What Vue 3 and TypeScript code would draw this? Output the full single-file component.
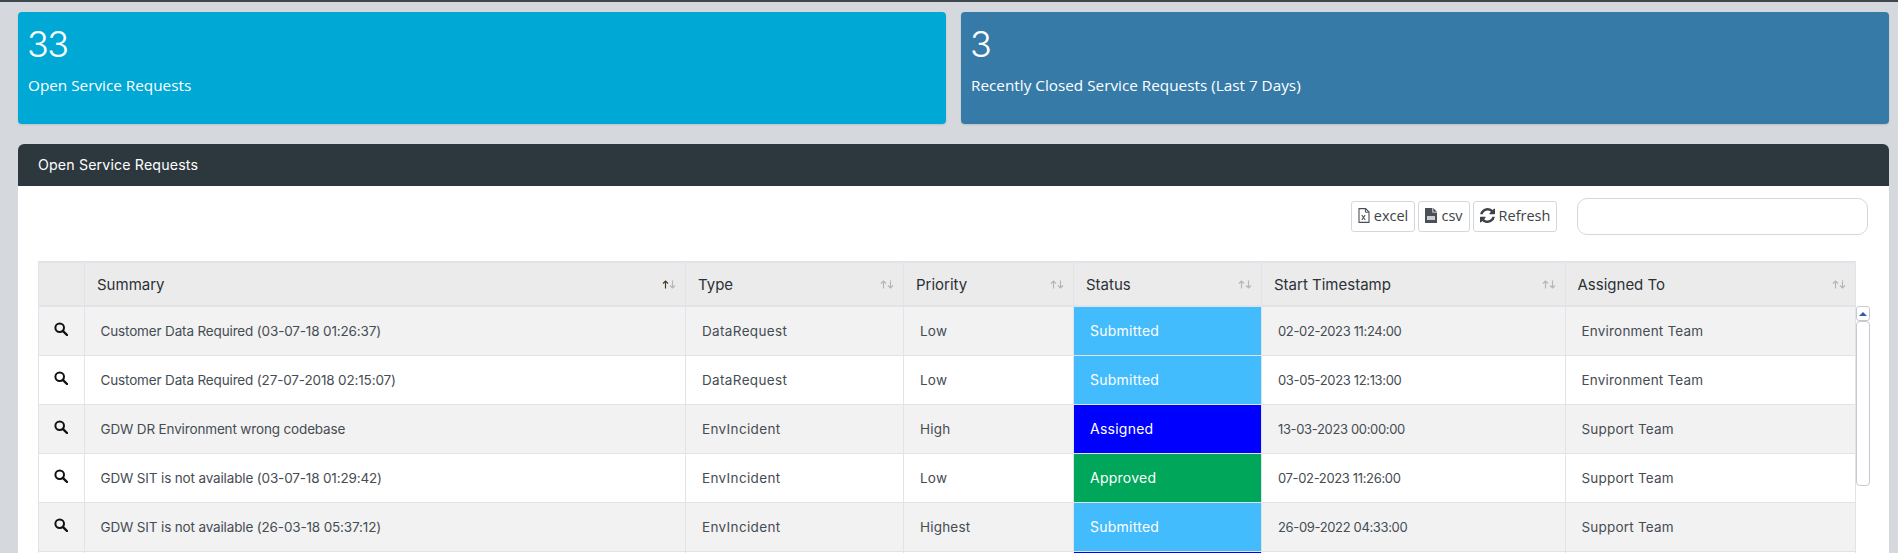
<script setup lang="ts">
interface Row { summary: string; type: string; priority: string; status: string; start: string; assigned: string }
const rows: Row[] = [
  { summary: 'Customer Data Required (03-07-18 01:26:37)', type: 'DataRequest', priority: 'Low', status: 'Submitted', start: '02-02-2023 11:24:00', assigned: 'Environment Team' },
  { summary: 'Customer Data Required (27-07-2018 02:15:07)', type: 'DataRequest', priority: 'Low', status: 'Submitted', start: '03-05-2023 12:13:00', assigned: 'Environment Team' },
  { summary: 'GDW DR Environment wrong codebase', type: 'EnvIncident', priority: 'High', status: 'Assigned', start: '13-03-2023 00:00:00', assigned: 'Support Team' },
  { summary: 'GDW SIT is not available (03-07-18 01:29:42)', type: 'EnvIncident', priority: 'Low', status: 'Approved', start: '07-02-2023 11:26:00', assigned: 'Support Team' },
  { summary: 'GDW SIT is not available (26-03-18 05:37:12)', type: 'EnvIncident', priority: 'Highest', status: 'Submitted', start: '26-09-2022 04:33:00', assigned: 'Support Team' },
]
const columns = ['Summary', 'Type', 'Priority', 'Status', 'Start Timestamp', 'Assigned To']
const statusClass = (s: string) => 's-' + s.toLowerCase()
</script>

<template>
  <div class="page">
    <div class="topline"></div>
    <div class="content">
      <div class="cards">
        <div class="card card-a">
          <div class="num">33</div>
          <div class="lbl">Open Service Requests</div>
        </div>
        <div class="card card-b">
          <div class="num">3</div>
          <div class="lbl">Recently Closed Service Requests (Last 7 Days)</div>
        </div>
      </div>
      <section class="panel">
        <header class="panel-head">Open Service Requests</header>
        <div class="panel-body">
          <div class="toolbar">
            <div class="btns">
              <button class="btn b-excel">
                <svg class="ic" viewBox="0 0 12 15"><path d="M1 .6h6.600L11 4v10.400H1z" fill="none" stroke="#4a5056" stroke-width="1.100"/><path d="M7.400.8v3.400h3.400" fill="none" stroke="#4a5056"/><path d="M3.800 7l3.400 5M7.200 7l-3.400 5" stroke="#4a5056" stroke-width="1.100"/></svg>
                excel
              </button>
              <button class="btn b-csv">
                <svg class="ic" viewBox="0 0 12 15"><path d="M0 0h7.400v4.400H12V15H0zM8.200 0L12 3.700H8.200z" fill="#4a5056"/><rect x="2" y="8" width="8" height="4" fill="#c9ccd0"/></svg>
                csv
              </button>
              <button class="btn b-ref">
                <svg class="ic ic-r" viewBox="0 0 1536 1536"><path fill="#3d4349" d="M1511 928q0 5-1 7-64 268-268 434.500t-478 166.500q-146 0-282.500-55t-243.500-157l-129 129q-19 19-45 19t-45-19-19-45v-448q0-26 19-45t45-19h448q26 0 45 19t19 45-19 45l-137 137q71 66 161 102t187 36q134 0 250-65t186-179q11-17 53-117 8-23 30-23h192q13 0 22.500 9.500t9.500 22.500zm25-800v448q0 26-19 45t-45 19h-448q-26 0-45-19t-19-45 19-45l138-138q-148-137-349-137-134 0-250 65t-186 179q-11 17-53 117-8 23-30 23h-199q-13 0-22.500-9.500t-9.500-22.500v-7q65-268 270-434.500t480-166.500q146 0 284 55.500t245 156.500l130-129q19-19 45-19t45 19 19 45z"/></svg>
                Refresh
              </button>
            </div>
            <input class="search" type="text" />
          </div>
          <div class="table-wrap">
            <table class="grid">
              <colgroup>
                <col class="c0" /><col class="c1" /><col class="c2" /><col class="c3" /><col class="c4" /><col class="c5" /><col class="c6" />
              </colgroup>
              <thead>
                <tr>
                  <th></th>
                  <th v-for="(c, i) in columns" :key="c">
                    <div class="th-in">
                      <span>{{ c }}</span>
                      <svg class="sort" viewBox="0 0 14 9">
                        <path d="M3.500 8.500V1M1 3.500L3.500 1 6 3.500" fill="none" :stroke="i === 0 ? '#4a3a2a' : '#b4b6b8'" stroke-width="1.200"/>
                        <path d="M10.500.5V8M8 5.500L10.500 8 13 5.500" fill="none" stroke="#b4b6b8" stroke-width="1.200"/>
                      </svg>
                    </div>
                  </th>
                </tr>
              </thead>
              <tbody>
                <tr v-for="r in rows" :key="r.summary">
                  <td class="act">
                    <svg class="mag" viewBox="0 0 14 14"><circle cx="5.700" cy="5.700" r="4.300" fill="none" stroke="#111" stroke-width="2"/><path d="M8.800 8.800L13 13" stroke="#111" stroke-width="2.400" stroke-linecap="round"/></svg>
                  </td>
                  <td class="t-sum">{{ r.summary }}</td>
                  <td class="t-type">{{ r.type }}</td>
                  <td>{{ r.priority }}</td>
                  <td class="st" :class="statusClass(r.status)">{{ r.status }}</td>
                  <td class="t-date">{{ r.start }}</td>
                  <td>{{ r.assigned }}</td>
                </tr>
                <tr>
                  <td class="act"></td><td></td><td></td><td></td><td class="st s-assigned"></td><td></td><td></td>
                </tr>
              </tbody>
            </table>
            <div class="scroll">
              <div class="sb-btn"><span class="tri"></span></div>
              <div class="sb-thumb"></div>
            </div>
          </div>
        </div>
      </section>
    </div>
  </div>
</template>

<style>
html, body { margin: 0; height: 553px; overflow: hidden; background: #d5d8dd; }
</style>

<style scoped>
.page { height: 553px; overflow: hidden; background: #d5d8dd; font-family: "Inter", "Liberation Sans", sans-serif; }
.topline { height: 2px; background: #3e474e; }
.content { padding: 10px 9px 0 18px; }
.cards { display: flex; gap: 15px; margin-bottom: 20px; }
.card { flex: 1; height: 112px; box-sizing: border-box; border-radius: 4px; color: #fff; padding: 12px 10px; box-shadow: 0 1px 2px rgba(0,0,0,.12); }
.card-a { background: #00a8d6; }
.card-b { background: #367ba8; }
.num { font-size: 36px; font-weight: 300; line-height: 40px; letter-spacing: -1.500px; margin-left: -1px; }
.lbl { font-family: "Open Sans", sans-serif; font-size: 15.300px; line-height: 20px; margin-top: 11px; }
.panel { border-radius: 6px 6px 0 0; overflow: hidden; background: #fff; }
.panel-head { height: 42px; background: #2d383e; color: #fff; font-size: 14.200px; line-height: 42px; padding-left: 20px; letter-spacing: .15px; }
.panel-body { padding: 12px 21px 0 20px; }
.toolbar { display: flex; justify-content: flex-end; align-items: center; height: 37px; margin-bottom: 26px; }
.btns { display: flex; gap: 3px; }
.btn { display: flex; align-items: center; justify-content: center; gap: 4px; height: 31px; padding: 0 0 2px; border: 1px solid #d3d7de; border-radius: 3px; background: #fff; color: #3d4349; font-family: "Open Sans", sans-serif; font-size: 14.500px; }
.b-excel { width: 64px; }
.b-csv { width: 52px; }
.b-ref { width: 84px; }
.ic { width: 12px; height: 15px; }
.ic-r { width: 15px; height: 15px; }
.search { width: 291px; height: 37px; box-sizing: border-box; margin-left: 20px; border: 1px solid #d3d7de; border-radius: 10px; background: #fff; outline: none; }
.table-wrap { display: flex; align-items: flex-start; }
.grid { width: 1817px; flex: none; table-layout: fixed; border-collapse: collapse; color: #454c52; font-size: 13.500px; }
.c0 { width: 46px; } .c1 { width: 601px; } .c2 { width: 218px; } .c3 { width: 170px; } .c4 { width: 188px; } .c5 { width: 303.500px; } .c6 { width: 290.500px; }
th { height: 42px; background: #ebebeb; border: 1px solid #e0e3e8; border-top-width: 2px; border-bottom-width: 2px; padding: 0 9px 0 12px; font-weight: 400; font-size: 15px; color: #2b3136; text-align: left; }
.th-in { display: flex; align-items: center; justify-content: space-between; }
.sort { width: 14px; height: 9px; }
td { height: 49px; padding: 0 10px 0 16px; border: 1px solid #e0e3e8; border-top: 0; box-sizing: border-box; background: #fff; white-space: nowrap; letter-spacing: .2px; }
td.t-sum { letter-spacing: -.15px; padding-left: 15.500px; }
td.t-type { letter-spacing: .35px; }
td.t-date { font-size: 13px; letter-spacing: -.35px; }
tbody tr:nth-child(odd) td { background: #f2f2f2; }
tbody tr td.act { padding: 0; text-align: center; }
.mag { width: 14px; height: 14px; display: block; margin: -3px auto 0 15px; }
tbody tr td.st { color: #fff; border-left: 0; border-right: 0; padding-left: 16px; font-size: 14px; letter-spacing: .25px; }
tbody tr td.s-submitted { background: #42bcfd; }
tbody tr td.s-assigned { background: #0000ff; }
tbody tr td.s-approved { background: #00a65a; }
.scroll { width: 14px; flex: none; margin-top: 45px; }
.sb-btn { height: 15px; box-sizing: border-box; border: 1px solid #c6cad0; border-radius: 3px; display: flex; align-items: center; justify-content: center; background: #fff; }
.tri { width: 0; height: 0; border-left: 4px solid transparent; border-right: 4px solid transparent; border-bottom: 4px solid #2f5ea8; }
.sb-thumb { height: 165px; box-sizing: border-box; border: 1px solid #c6cad0; border-radius: 4px; background: #fff; }
</style>
